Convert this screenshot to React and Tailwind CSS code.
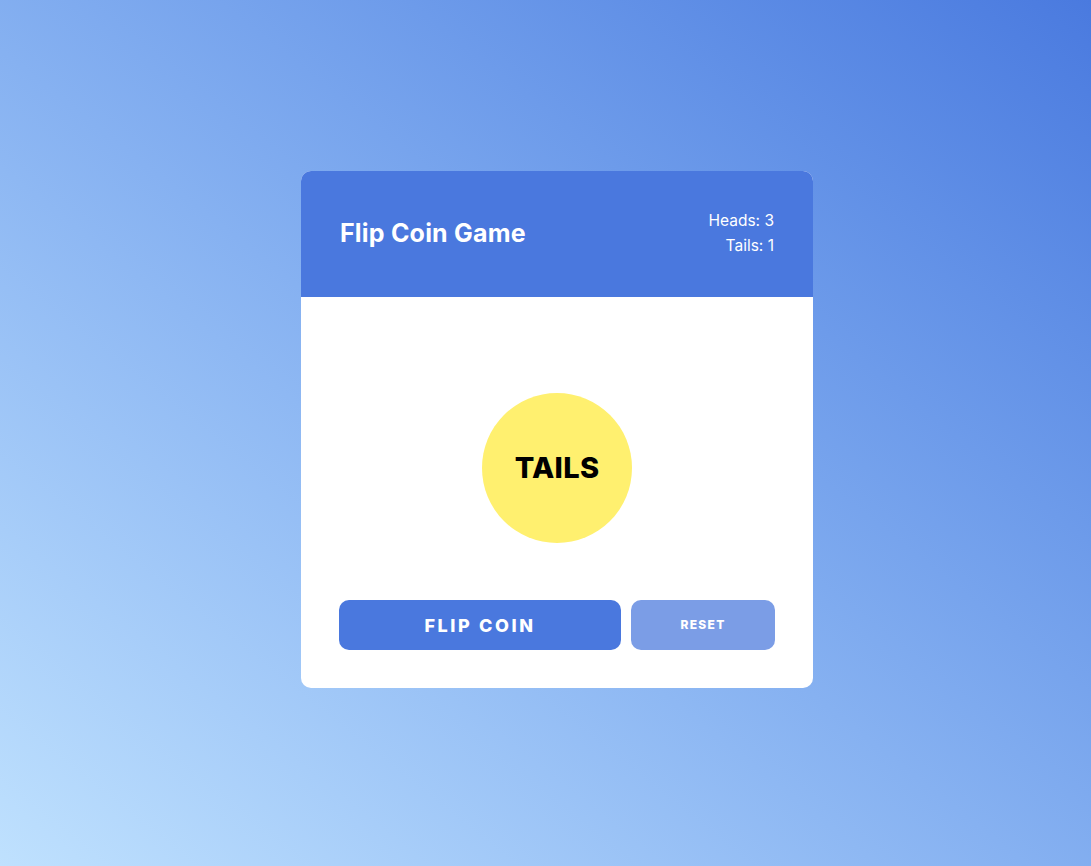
import React, { useState } from 'react';

const App = () => {
  const [heads, setHeads] = useState(3);
  const [tails, setTails] = useState(1);
  const [side, setSide] = useState('TAILS');

  const flip = () => {
    const isHeads = Math.random() < 0.5;
    setSide(isHeads ? 'HEADS' : 'TAILS');
    if (isHeads) setHeads((h) => h + 1);
    else setTails((t) => t + 1);
  };

  const reset = () => {
    setHeads(0);
    setTails(0);
  };

  return (
    <div
      className="min-h-screen w-full flex justify-center pt-[171px] pl-[23px] bg-linear-to-tr from-[#bfe1fe] to-[#4a7adf]"
      style={{ fontFamily: 'Inter, "Noto Sans", sans-serif' }}
    >
      <div className="w-[512px] h-[517px] bg-white rounded-[10px] overflow-hidden flex flex-col">
        <div className="h-[126px] bg-[#4a78de] flex items-center justify-between px-[39px] text-white">
          <h1 className="text-[25px] font-bold tracking-[0.2px]">Flip Coin Game</h1>
          <div className="text-right text-[15.5px] leading-[25px] mt-[-2px]">
            <div>Heads: {heads}</div>
            <div>Tails: {tails}</div>
          </div>
        </div>
        <div className="flex-1 flex flex-col items-center px-[38px] pt-[96px]">
          <div className="w-[150px] h-[150px] rounded-full bg-[#fff06f] flex items-center justify-center">
            <span className="text-[29px] font-extrabold text-black tracking-[0.3px]">{side}</span>
          </div>
          <div className="w-full flex gap-[10px] mt-[57px]">
            <button
              onClick={flip}
              className="w-[282px] h-[50px] rounded-[10px] bg-[#4a78de] text-white text-[18px] font-extrabold tracking-[2.6px]"
            >
              FLIP COIN
            </button>
            <button
              onClick={reset}
              className="flex-1 h-[50px] rounded-[10px] bg-[#7b9de6] text-white text-[12px] font-extrabold tracking-[1.3px]"
            >
              RESET
            </button>
          </div>
        </div>
      </div>
    </div>
  );
};

export default App;
